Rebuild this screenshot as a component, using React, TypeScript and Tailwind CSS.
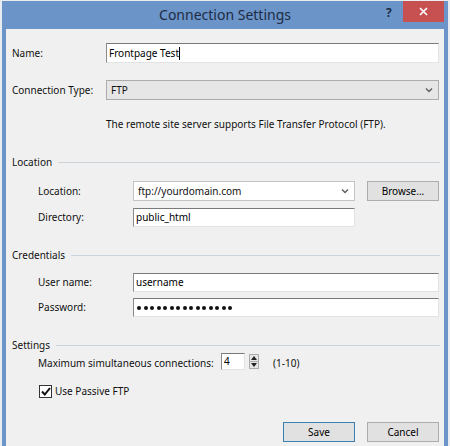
import { useState } from "react";

const font = { fontFamily: '"Noto Sans", "Open Sans", sans-serif' };

function SectionHeader({ title }: { title: string }) {
  return (
    <div className="flex items-center h-4 pl-[6px] pr-1">
      <span className="leading-4">{title}</span>
      <div className="flex-1 h-px bg-[#cdd5dc] ml-[6px]" />
    </div>
  );
}

function TextBox({ className = "", children }: { className?: string; children?: React.ReactNode }) {
  return (
    <div
      className={`bg-white border border-t-[#7a7a7a] border-l-[#8a8a8a] border-r-[#e3e3e3] border-b-[#e3e3e3] flex items-center pl-[2px] text-black ${className}`}
    >
      {children}
    </div>
  );
}

function Chevron() {
  return (
    <svg width="8" height="6" viewBox="0 0 8 6">
      <path d="M1 1.5 L4 4.5 L7 1.5" fill="none" stroke="#606060" strokeWidth="1.5" />
    </svg>
  );
}

function WinButton({ label, primary = false }: { label: string; primary?: boolean }) {
  return (
    <button
      className={`w-[72px] h-[20px] leading-none text-black bg-[#e1e1e1] border ${
        primary ? "border-[#3c7fb1]" : "border-[#adadad]"
      }`}
    >
      {label}
    </button>
  );
}

export default function App() {
  const [passive, setPassive] = useState(true);
  const dots = Array.from({ length: 15 });

  return (
    <div className="w-[450px] h-[446px] bg-[#e9edf2] pt-px px-[2px] overflow-hidden" style={font}>
      <div className="h-full bg-[#6b94c8] px-1 flex flex-col">
        {/* TITLE BAR */}
        <div className="h-[28px] relative flex items-center justify-center">
          <span className="text-[14px] text-[#1d2c44] -mt-[2px]">Connection Settings</span>
          <span className="absolute left-[380px] top-[3px] text-[12px] font-bold text-[#1d2c44]">?</span>
          <div className="absolute left-[397px] top-0 w-[41px] h-[21px] bg-[#c75050] flex items-center justify-center">
            <svg width="9" height="9" viewBox="0 0 9 9">
              <path d="M1 1 L8 8 M8 1 L1 8" stroke="white" strokeWidth="1.7" />
            </svg>
          </div>
        </div>

        {/* CONTENT */}
        <div className="flex-1 bg-[#f0f0f0] text-[10px] text-[#111]">
          {/* Name */}
          <div className="mt-[14px] flex items-center pl-[6px] pr-[5px]">
            <span className="w-[94px]">Name:</span>
            <TextBox className="flex-1 h-[20px]">
              <span>Frontpage Test</span>
              <span className="w-px h-[13px] bg-black" />
            </TextBox>
          </div>

          {/* Connection type */}
          <div className="mt-[17px] flex items-center pl-[6px] pr-[5px]">
            <span className="w-[94px]">Connection Type:</span>
            <div className="flex-1 h-[20px] bg-[#e6e6e6] border border-[#acacac] flex items-center justify-between pl-[4px] pr-[5px]">
              <span>FTP</span>
              <Chevron />
            </div>
          </div>

          <div className="mt-[16px] pl-[100px] leading-4">
            The remote site server supports File Transfer Protocol (FTP).
          </div>

          {/* Location */}
          <div className="mt-[22px]">
            <SectionHeader title="Location" />
          </div>
          <div className="mt-[11px] flex items-center pl-[32px] pr-[5px]">
            <span className="w-[95px]">Location:</span>
            <div className="w-[222px] h-[20px] bg-white border border-[#c3c3c3] flex items-center justify-between pl-[4px] pr-[5px]">
              <span>ftp://yourdomain.com</span>
              <Chevron />
            </div>
            <div className="ml-[12px]">
              <WinButton label="Browse..." />
            </div>
          </div>
          <div className="mt-[7px] flex items-center pl-[32px]">
            <span className="w-[95px]">Directory:</span>
            <TextBox className="w-[222px] h-[19px]">public_html</TextBox>
          </div>

          {/* Credentials */}
          <div className="mt-[20px]">
            <SectionHeader title="Credentials" />
          </div>
          <div className="mt-[10px] flex items-center pl-[32px] pr-[5px]">
            <span className="w-[95px]">User name:</span>
            <TextBox className="flex-1 h-[19px]">username</TextBox>
          </div>
          <div className="mt-[6px] flex items-center pl-[32px] pr-[5px]">
            <span className="w-[95px]">Password:</span>
            <TextBox className="flex-1 h-[19px] gap-[2.5px] pl-[3px]">
              {dots.map((_, i) => (
                <span key={i} className="w-[4px] h-[4px] rounded-full bg-[#111]" />
              ))}
            </TextBox>
          </div>

          {/* Settings */}
          <div className="mt-[20px]">
            <SectionHeader title="Settings" />
          </div>
          <div className="flex items-center pl-[32px] h-[17px]">
            <span className="w-[183px] pt-[3px]">Maximum simultaneous connections:</span>
            <TextBox className="w-[24px] h-[17px]">4</TextBox>
            <div className="ml-[4px] w-[10px] h-[15px] bg-[#e6e6e6] border border-[#adadad] flex flex-col items-center justify-around">
              <svg width="6" height="4" viewBox="0 0 6 4"><path d="M0 4 L3 0 L6 4 Z" fill="#222" /></svg>
              <div className="w-full h-px bg-[#adadad]" />
              <svg width="6" height="4" viewBox="0 0 6 4"><path d="M0 0 L3 4 L6 0 Z" fill="#222" /></svg>
            </div>
            <span className="ml-[14px] pt-[3px]">(1-10)</span>
          </div>
          <div className="mt-[14px] flex items-center pl-[33px]">
            <button
              onClick={() => setPassive(!passive)}
              className="w-[13px] h-[13px] bg-white border border-[#333] flex items-center justify-center"
            >
              {passive && (
                <svg width="10" height="9" viewBox="0 0 10 9">
                  <path d="M1 4.5 L3.8 7.5 L9 1" fill="none" stroke="#111" strokeWidth="2" />
                </svg>
              )}
            </button>
            <span className="ml-[3px]">Use Passive FTP</span>
          </div>

          {/* Buttons */}
          <div className="mt-[23px] flex justify-end gap-[12px] pr-[5px]">
            <WinButton label="Save" primary />
            <WinButton label="Cancel" />
          </div>
        </div>
      </div>
    </div>
  );
}
